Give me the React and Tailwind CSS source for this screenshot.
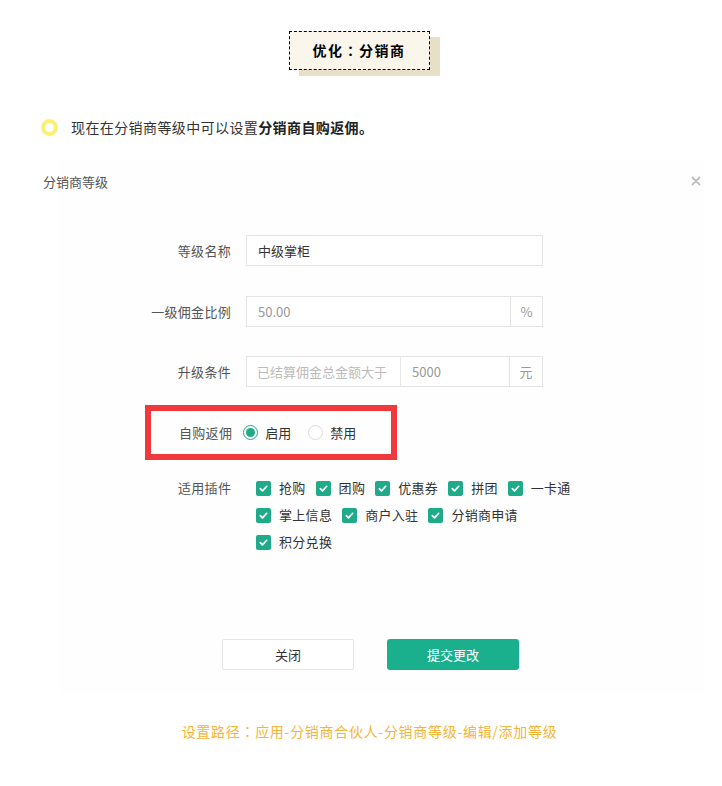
import React from 'react';

const plugins = ['抢购', '团购', '优惠券', '拼团', '一卡通', '掌上信息', '商户入驻', '分销商申请', '积分兑换'];

const Check = () => (
  <span className="w-[15px] h-[15px] rounded-[2px] bg-[#1fab89] flex items-center justify-center shrink-0">
    <svg width="11" height="11" viewBox="0 0 12 12" fill="none">
      <path d="M2.5 6.2l2.4 2.4 4.6-5" stroke="#fff" strokeWidth="1.8" strokeLinecap="round" strokeLinejoin="round" />
    </svg>
  </span>
);

const Colon = () => (
  <span style={{ fontFamily: '"Noto Sans CJK TC", sans-serif' }}>：</span>
);

const Label = ({ children }) => (
  <div className="w-[246px] pr-[15px] text-right text-[13px] tracking-[0.3px] text-[#555] shrink-0">{children}</div>
);

export default function App() {
  return (
    <div
      className="w-[722px] h-[786px] bg-white relative"
      style={{ fontFamily: '"Noto Sans CJK SC", "Noto Sans", sans-serif' }}
    >
      {/* title tag */}
      <div className="flex justify-center pt-[31px] pr-[4px]">
        <div className="relative">
          <div className="absolute left-[10px] top-[6px] w-[141px] h-[39px] bg-[#e8dfc9]" />
          <div className="relative w-[141px] h-[39px] border border-dashed border-black bg-[#faf6ec] flex items-center justify-center text-[14px] tracking-[1.5px] font-bold text-black">
            优化<Colon />分销商
          </div>
        </div>
      </div>

      {/* note */}
      <div className="flex items-center mt-[47px] pl-[41px] text-[14px] tracking-[0.4px] text-[#333]">
        <span className="w-[17px] h-[17px] rounded-full border-[4px] border-[#fdf070] mr-[13px]" />
        <span>现在在分销商等级中可以设置<b className="font-bold text-[#222]">分销商自购返佣。</b></span>
      </div>

      {/* modal */}
      <div className="mt-[21px] mr-[17px] relative">
        <div className="absolute left-[60px] top-0 right-0 h-[535px] bg-[#fefefe]" />
        <div className="relative">
          <div className="flex items-center justify-between h-[45px] pl-[43px] pr-[4px]">
            <span className="text-[13px] text-[#555]">分销商等级</span>
            <svg width="10" height="10" viewBox="0 0 10 10" className="mt-[-2px]">
              <path d="M1.5 1.5l7 7M8.5 1.5l-7 7" stroke="#bdbdbd" strokeWidth="1.8" strokeLinecap="round" />
            </svg>
          </div>

          <div className="pt-[31px]">
            {/* 等级名称 */}
            <div className="flex items-center h-[31px]">
              <Label>等级名称</Label>
              <div className="w-[297px] h-[31px] border border-[#e5e5e5] bg-white flex items-center px-[11px] text-[13px] text-[#333]">
                中级掌柜
              </div>
            </div>

            {/* 一级佣金比例 */}
            <div className="flex items-center h-[31px] mt-[30px]">
              <Label>一级佣金比例</Label>
              <div className="w-[297px] h-[31px] border border-[#e5e5e5] bg-white flex text-[13px]">
                <div className="flex-1 flex items-center px-[11px] text-[#999]">50.00</div>
                <div className="w-[32px] border-l border-[#e5e5e5] flex items-center justify-center text-[#999]">%</div>
              </div>
            </div>

            {/* 升级条件 */}
            <div className="flex items-center h-[31px] mt-[29px]">
              <Label>升级条件</Label>
              <div className="w-[297px] h-[31px] border border-[#e5e5e5] bg-white flex text-[13px]">
                <div className="w-[153px] flex items-center px-[10px] text-[#bbb] whitespace-nowrap">已结算佣金总金额大于</div>
                <div className="flex-1 border-l border-[#e5e5e5] flex items-center px-[11px] text-[#999]">5000</div>
                <div className="w-[33px] border-l border-[#e5e5e5] flex items-center justify-center text-[#999]">元</div>
              </div>
            </div>

            {/* 自购返佣 */}
            <div className="mt-[18px] ml-[145px] w-[252px] h-[55px] border-[6px] border-[#f0393c] flex items-center">
              <span className="ml-[28px] text-[13px] tracking-[0.3px] text-[#555]">自购返佣</span>
              <span className="ml-[11px] w-[15px] h-[15px] rounded-full border border-[#1fab89] flex items-center justify-center">
                <span className="w-[9px] h-[9px] rounded-full bg-[#1fab89]" />
              </span>
              <span className="ml-[7px] text-[13px] text-[#333]">启用</span>
              <span className="ml-[17px] w-[15px] h-[15px] rounded-full border border-[#ddd] bg-white" />
              <span className="ml-[7px] text-[13px] text-[#333]">禁用</span>
            </div>

            {/* 适用插件 */}
            <div className="flex items-start mt-[19px]">
              <div className="w-[178px]" />
              <div className="w-[78px] text-[13px] tracking-[0.3px] text-[#555] leading-[18px]">适用插件</div>
              <div className="w-[340px] flex flex-wrap gap-y-[9px] gap-x-[10px]">
                {plugins.map((p) => (
                  <div key={p} className="flex items-center h-[18px]">
                    <Check />
                    <span className="ml-[8px] text-[13px] tracking-[0.3px] text-[#333] whitespace-nowrap">{p}</span>
                  </div>
                ))}
              </div>
            </div>

            {/* buttons */}
            <div className="flex mt-[88px] pl-[222px] gap-[33px]">
              <button className="w-[132px] h-[31px] border border-[#e6e6e6] rounded-[2px] bg-white text-[13px] text-[#333]">关闭</button>
              <button className="w-[132px] h-[31px] rounded-[3px] bg-[#1ab08e] text-[13px] text-white">提交更改</button>
            </div>
          </div>
        </div>
      </div>

      <div className="mt-[51px] text-center pl-[17px] text-[14px] tracking-[0.7px] text-[#f6b43a]">
        设置路径<Colon />应用-分销商合伙人-分销商等级-编辑/添加等级
      </div>
    </div>
  );
}
